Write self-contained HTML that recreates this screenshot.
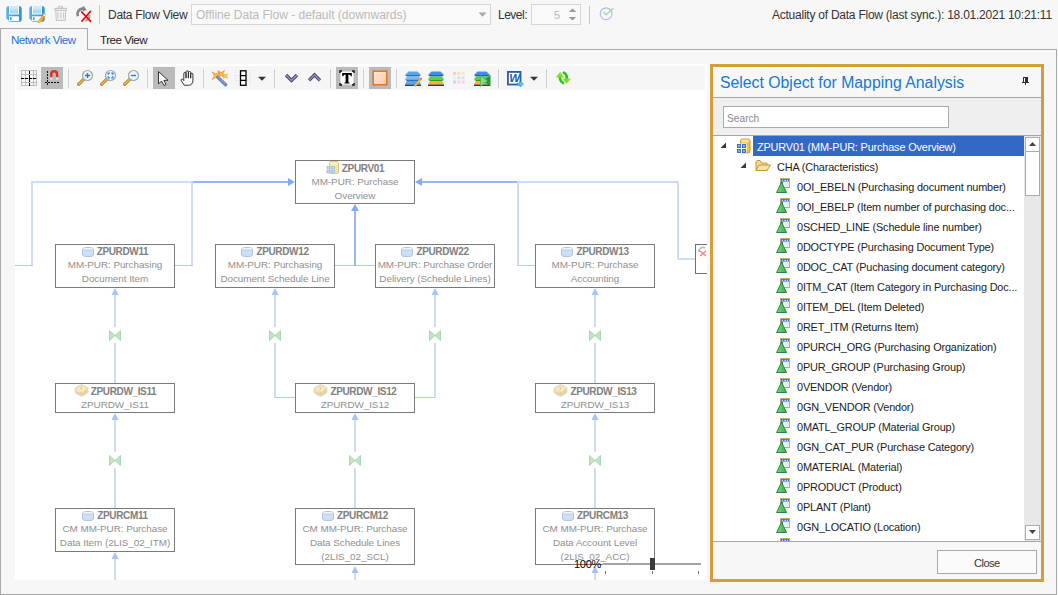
<!DOCTYPE html>
<html><head><meta charset="utf-8">
<style>
*{box-sizing:border-box}
html,body{margin:0;padding:0}
body{width:1058px;height:595px;background:#f7f7f7;position:relative;overflow:hidden;font-family:"Liberation Sans",sans-serif;color:#333}
.a{position:absolute}
.t{position:absolute;white-space:nowrap;line-height:1}
.sep{position:absolute;width:1px;background:#c8c8c8}
.bx{position:absolute;width:120px;border:1px solid #7a7a7a;background:#fff;text-align:center;font-size:9.9px;letter-spacing:-0.05px;line-height:14px;color:#8f8f8f;white-space:nowrap}
.bx div{position:relative;top:-1px}
.bx .bt{font-weight:bold;color:#808080;font-size:10px;letter-spacing:-0.35px;top:0}
.li{position:absolute;white-space:nowrap;font-size:10.9px;letter-spacing:-0.16px;line-height:20px;color:#222}
</style></head><body>
<!-- top toolbar -->
<div class="sep" style="left:99px;top:5px;height:19px"></div>
<div class="t" style="left:108px;top:9px;font-size:12px;letter-spacing:-0.27px;color:#333">Data Flow View</div>
<div class="a" style="left:191px;top:4px;width:300px;height:21px;border:1px solid #d6d6d6;background:#f9f9f9"></div>
<div class="t" style="left:196px;top:9px;font-size:12px;color:#bababa">Offline Data Flow - default (downwards)</div>
<div class="t" style="left:498px;top:9px;font-size:12px;letter-spacing:-0.5px;color:#333">Level:</div>
<div class="a" style="left:531px;top:4px;width:50px;height:21px;border:1px solid #d6d6d6;background:#f9f9f9"></div>
<div class="t" style="left:554px;top:10px;font-size:11px;color:#b8b8b8">5</div>
<div class="sep" style="left:589px;top:6px;height:18px"></div>
<div class="t" style="left:772px;top:9px;font-size:12px;letter-spacing:-0.24px;color:#333">Actuality of Data Flow (last sync.): 18.01.2021 10:21:11</div>

<!-- tabs & panel border -->
<div class="a" style="left:0;top:49px;width:1057px;height:546px;border:1px solid #a9a9a9;border-right-width:1px"></div>
<div class="a" style="left:0;top:28px;width:88px;height:22px;border:1px solid #a9a9a9;border-bottom:none;background:#f7f7f7"></div>
<div class="t" style="left:11px;top:34px;font-size:11.6px;letter-spacing:-0.5px;color:#1a74d6">Network View</div>
<div class="t" style="left:100px;top:34px;font-size:11.6px;letter-spacing:-0.5px;color:#222">Tree View</div>

<!-- canvas -->
<div class="a" style="left:15px;top:64px;width:692px;height:516px;background:#fff"></div>
<div class="a" style="left:17px;top:66px;width:688px;height:24px;background:#f6f6f6"></div>

<!-- top icons -->
<svg class="a" style="left:6px;top:6px" width="16" height="16" viewBox="0 0 16 16"><defs><linearGradient id="fl" x1="0" y1="0" x2="0" y2="1"><stop offset="0" stop-color="#d6eef9"/><stop offset="1" stop-color="#a3d2ee"/></linearGradient><linearGradient id="fb" x1="0" y1="0" x2="1" y2="0"><stop offset="0" stop-color="#5ab3e4"/><stop offset="1" stop-color="#2f93d2"/></linearGradient></defs><path d="M2.5 0.3 H13.5 Q15.7 0.3 15.7 2.5 V13.5 Q15.7 15.7 13.5 15.7 H3.8 L0.3 12.2 V2.5 Q0.3 0.3 2.5 0.3Z" fill="url(#fb)"/><rect x="3" y="0.3" width="10" height="8.2" fill="#fff"/><rect x="4" y="0.3" width="8" height="7.2" fill="url(#fl)"/><rect x="3" y="10.3" width="10" height="4.6" fill="#fff"/><rect x="4" y="11.2" width="1.6" height="2.6" fill="#3d9fd8"/></svg>
<svg class="a" style="left:29px;top:6px" width="17" height="17" viewBox="0 0 17 17"><defs><linearGradient id="pg" x1="0" y1="0" x2="1" y2="0"><stop offset="0" stop-color="#ffd23a"/><stop offset="1" stop-color="#f47a1c"/></linearGradient></defs><path d="M2.5 0.3 H13.5 Q15.7 0.3 15.7 2.5 V13.5 Q15.7 15.7 13.5 15.7 H3.8 L0.3 12.2 V2.5 Q0.3 0.3 2.5 0.3Z" fill="url(#fb)"/><rect x="3" y="0.3" width="10" height="8.2" fill="#fff"/><rect x="4" y="0.3" width="8" height="7.2" fill="url(#fl)"/><rect x="3" y="10.3" width="10" height="4.6" fill="#fff"/><rect x="4" y="11.2" width="1.6" height="2.6" fill="#3d9fd8"/><path d="M8.3 15.3 L13.8 9 L16.3 11 L10.6 17.2 L8 17.2Z" fill="url(#pg)"/><path d="M13.8 9 L15 7.6 L17 9.4 L16.3 11Z" fill="#e6eef2"/><path d="M15 7.6 L15.8 6.8 L17 7.9 L17 9.4Z" fill="#f49a8a"/></svg>
<svg class="a" style="left:54px;top:5px" width="14" height="17" viewBox="0 0 14 17"><g fill="none" stroke="#c6c6c6" stroke-width="1.1"><rect x="4.5" y="1.2" width="4" height="2" rx="0.8"/><rect x="0.7" y="3.4" width="12" height="2" rx="0.8"/><path d="M1.8 5.6 L2.3 15.4 H11.2 L11.7 5.6"/><path d="M4 7.2 V13.5 M6.8 7.2 V13.5 M9.6 7.2 V13.5"/></g></svg>
<svg class="a" style="left:75px;top:5px" width="18" height="18" viewBox="0 0 18 18"><path d="M2.8 11.2 Q1.4 4.4 8.2 3.4" fill="none" stroke="#858585" stroke-width="2.6"/><polygon points="8.3,0.6 11.6,4.9 7.6,6.4" fill="#858585"/><path d="M14.4 9.8 Q14.8 14.6 10.4 15.6" fill="none" stroke="#a3a3a3" stroke-width="2.2"/><path d="M6.6 6.8 L15.6 16.4 M15.5 6.4 L6.8 16.2" stroke="#e21010" stroke-width="1.7" stroke-linecap="round"/></svg>
<svg class="a" style="left:595px;top:5px" width="22" height="18" viewBox="0 0 22 18"><circle cx="11.1" cy="8.7" r="5.9" fill="none" stroke="#b4bbee" stroke-width="1.2"/><path d="M8.5 7 L11 9.8 L18.5 3.2" fill="none" stroke="#a6dba8" stroke-width="1.4"/></svg>
<!-- combo arrows -->
<svg class="a" style="left:478px;top:12px" width="9" height="6" viewBox="0 0 9 6"><polygon points="0.5,0.5 8.5,0.5 4.5,4.8" fill="#a8a8a8"/></svg>
<svg class="a" style="left:568px;top:8px" width="9" height="14" viewBox="0 0 9 14"><polygon points="4.5,0.5 8.3,4 0.7,4" fill="#999"/><polygon points="0.7,9 8.3,9 4.5,12.5" fill="#999"/></svg>

<!-- diagram toolbar -->
<svg class="a" style="left:21px;top:70px" width="16" height="16" viewBox="0 0 16 16"><g stroke="#bdbdbd" stroke-width="1" shape-rendering="crispEdges"><path d="M0.5 0 V16 M4.5 0 V16 M8.5 0 V16 M12 0 V16 M15.5 0 V16 M0 0.5 H16 M0 4.5 H16 M0 8.5 H16 M0 12 H16 M0 15.5 H16"/></g><g stroke="#000" stroke-width="1.4" stroke-dasharray="3 1" shape-rendering="crispEdges"><path d="M8.5 1 V16 M0 8.5 H16"/></g></svg>
<div class="a" style="left:41px;top:67px;width:22px;height:22px;background:#bbbbbb"></div>
<svg class="a" style="left:43px;top:69px" width="18" height="18" viewBox="0 0 18 18"><g stroke="#111" stroke-width="1.2" stroke-dasharray="1.5 1.5" shape-rendering="crispEdges"><path d="M4.5 2 V17 M2 13.5 H17"/></g><path d="M8.3 8.5 V5.2 A2.9 2.9 0 0 1 14.1 5.2 V8.5" fill="none" stroke="#d83030" stroke-width="2.4"/><rect x="7.1" y="8.3" width="2.4" height="2.4" fill="#dde3e6"/><rect x="12.9" y="8.3" width="2.4" height="2.4" fill="#dde3e6"/></svg>
<div class="sep" style="left:68px;top:69px;height:19px;background:#d0d0d0"></div>
<svg class="a" style="left:76px;top:69px" width="18" height="18" viewBox="0 0 18 18"><path d="M2.6 15.4 L7.6 10.4" stroke="#a8741f" stroke-width="3" stroke-linecap="round"/><path d="M2.6 15.4 L7.6 10.4" stroke="#e8b552" stroke-width="1.6" stroke-linecap="round"/><circle cx="11.5" cy="6.5" r="5" fill="#eef3f5" stroke="#9eaaa8" stroke-width="1.2"/><path d="M11.5 3.9 V9.1 M8.9 6.5 H14.1" stroke="#1f7be0" stroke-width="1.4"/></svg>
<svg class="a" style="left:99px;top:69px" width="18" height="18" viewBox="0 0 18 18"><path d="M2.6 15.4 L7.6 10.4" stroke="#a8741f" stroke-width="3" stroke-linecap="round"/><path d="M2.6 15.4 L7.6 10.4" stroke="#e8b552" stroke-width="1.6" stroke-linecap="round"/><circle cx="11.5" cy="6.5" r="5" fill="#eef3f5" stroke="#9eaaa8" stroke-width="1.2"/><path d="M9.2 5.8 V4.2 H10.8 M12.2 4.2 H13.8 V5.8 M13.8 7.2 V8.8 H12.2 M10.8 8.8 H9.2 V7.2" fill="none" stroke="#1f7be0" stroke-width="1.2"/></svg>
<svg class="a" style="left:122px;top:69px" width="18" height="18" viewBox="0 0 18 18"><path d="M2.6 15.4 L7.6 10.4" stroke="#a8741f" stroke-width="3" stroke-linecap="round"/><path d="M2.6 15.4 L7.6 10.4" stroke="#e8b552" stroke-width="1.6" stroke-linecap="round"/><circle cx="11.5" cy="6.5" r="5" fill="#eef3f5" stroke="#9eaaa8" stroke-width="1.2"/><path d="M8.9 6.5 H14.1" stroke="#1f7be0" stroke-width="1.4"/></svg>
<div class="sep" style="left:147px;top:69px;height:19px;background:#d0d0d0"></div>
<div class="a" style="left:153px;top:67px;width:22px;height:22px;background:#bbbbbb"></div>
<svg class="a" style="left:157px;top:70px" width="14" height="17" viewBox="0 0 14 17"><path d="M1.5 1.5 V14 L4.5 11 L7 15.5 L9 14.5 L6.8 10.3 L11 10.3Z" fill="#fff" stroke="#333" stroke-width="1" stroke-linejoin="round"/></svg>
<svg class="a" style="left:180px;top:70px" width="15" height="16" viewBox="0 0 15 16"><path d="M4.2 15.2 L1.3 10.8 Q0.7 9.7 1.6 9.2 Q2.4 8.8 3.1 9.7 L3.8 10.6 V3.6 Q3.8 2.5 4.9 2.5 Q6 2.5 6 3.6 V8.2 V2 Q6 0.9 7.2 0.9 Q8.4 0.9 8.4 2 V8.2 V2.6 Q8.4 1.5 9.5 1.5 Q10.7 1.5 10.7 2.6 V8.2 V4.2 Q10.7 3.2 11.8 3.2 Q12.9 3.2 12.9 4.2 V10.2 Q12.9 15.2 8.6 15.2Z" fill="#fff" stroke="#1e1e1e" stroke-width="0.9" stroke-linejoin="round"/></svg>
<div class="sep" style="left:203px;top:69px;height:19px;background:#d0d0d0"></div>
<svg class="a" style="left:211px;top:69px" width="18" height="18" viewBox="0 0 18 18"><polygon points="13.49,8.39 10.10,6.40 6.71,8.39 8.70,5.00 6.71,1.61 10.10,3.60 13.49,1.61 11.50,5.00" fill="#f9c23c" stroke="#f58a2a" stroke-width="0.7" stroke-linejoin="round"/><polygon points="16.63,9.33 14.30,8.10 11.97,9.33 13.20,7.00 11.97,4.67 14.30,5.90 16.63,4.67 15.40,7.00" fill="#fbd35a" stroke="#f5a040" stroke-width="0.6" stroke-linejoin="round"/><polygon points="8.75,10.45 5.00,8.30 1.25,10.45 3.40,6.70 1.25,2.95 5.00,5.10 8.75,2.95 6.60,6.70" fill="#f9c23c" stroke="#f5842a" stroke-width="0.7" stroke-linejoin="round"/><path d="M6.8 8.2 L14.6 15.8" stroke="#7283b5" stroke-width="3.3" stroke-linecap="round"/><path d="M7.2 8 L14.2 14.8" stroke="#c9d3ef" stroke-width="0.9" stroke-dasharray="1.2 0.8"/></svg>
<svg class="a" style="left:235px;top:70px" width="16" height="16" viewBox="0 0 16 16"><g stroke="#e4e4e4" stroke-dasharray="1 1"><path d="M0 5.5 H16 M0 10.5 H16 M1 0 V16 M15 0 V16"/></g><rect x="5.5" y="0.8" width="5.5" height="14.5" fill="#fff" stroke="#000" stroke-width="1.3"/><path d="M5.5 5.6 H11 M5.5 10.4 H11" stroke="#000" stroke-width="1.3"/></svg>
<svg class="a" style="left:257px;top:76px" width="10" height="6" viewBox="0 0 10 6"><polygon points="1,0.8 9,0.8 5,4.8" fill="#333"/></svg>
<div class="sep" style="left:274px;top:69px;height:19px;background:#d0d0d0"></div>
<svg class="a" style="left:284px;top:72px" width="15" height="11" viewBox="0 0 15 11"><path d="M2 3 L7.5 8.5 L13 3" fill="none" stroke="#45456a" stroke-width="3.3" stroke-linejoin="miter"/><path d="M2 3 L7.5 8.5 L13 3" fill="none" stroke="#9c9cc8" stroke-width="1.2" stroke-linejoin="miter"/></svg>
<svg class="a" style="left:307px;top:72px" width="15" height="11" viewBox="0 0 15 11"><path d="M2 8.3 L7.5 2.8 L13 8.3" fill="none" stroke="#45456a" stroke-width="3.3" stroke-linejoin="miter"/><path d="M2 8.3 L7.5 2.8 L13 8.3" fill="none" stroke="#9c9cc8" stroke-width="1.2" stroke-linejoin="miter"/></svg>
<div class="sep" style="left:330px;top:69px;height:19px;background:#d0d0d0"></div>
<div class="a" style="left:336px;top:67px;width:22px;height:22px;background:#bbbbbb"></div>
<svg class="a" style="left:339px;top:70px" width="16" height="16" viewBox="0 0 16 16"><rect x="1.5" y="1.5" width="13" height="13" fill="#fff"/><path d="M1 3 V1 H3 M13 1 H15 V3 M15 13 V15 H13 M3 15 H1 V13" fill="none" stroke="#111" stroke-width="1.4"/><path d="M3.2 3 H12.8 V6.2 H11.8 Q11.6 4.4 9.4 4.4 V12 Q9.4 12.7 10.6 12.7 V13.6 H5.4 V12.7 Q6.6 12.7 6.6 12 V4.4 Q4.4 4.4 4.2 6.2 H3.2Z" fill="#000"/></svg>
<div class="sep" style="left:363px;top:69px;height:19px;background:#d0d0d0"></div>
<div class="a" style="left:369px;top:67px;width:22px;height:22px;background:#bbbbbb"></div>
<svg class="a" style="left:372px;top:70px" width="16" height="16" viewBox="0 0 16 16"><defs><linearGradient id="og" x1="0" y1="0" x2="1" y2="1"><stop offset="0" stop-color="#ffe6d6"/><stop offset="1" stop-color="#ffc9a6"/></linearGradient></defs><rect x="1.2" y="1.2" width="13.6" height="13.6" fill="url(#og)" stroke="#e8731c" stroke-width="1.5"/></svg>
<div class="sep" style="left:396px;top:69px;height:19px;background:#d0d0d0"></div>
<svg class="a" style="left:405px;top:71px" width="17" height="16" viewBox="0 0 17 16"><path d="M3.5 0.5 H12.5 L16 4 H0Z" fill="#5aa5ea"/><path d="M0 4 H16 L14 5.5 H2Z" fill="#2f6fc0"/><path d="M2 5.5 H14 L16 8.5 H0Z" fill="#7ab8f0"/><path d="M0 8.5 H16 L14 10 H2Z" fill="#2f6fc0"/><path d="M2 10 H14 L16 13.5 H0Z" fill="#5aa5ea"/><rect x="0" y="13.5" width="16" height="1.5" fill="#1c3c78"/><path d="M9 14.5 L15 7.5 L16.5 8.8 L10.5 15.5Z" fill="#f3c94a" stroke="#b08a20" stroke-width="0.5"/><path d="M15 7.5 L16 6.5 L17 7.5 L16.5 8.8Z" fill="#e05050"/></svg>
<svg class="a" style="left:428px;top:71px" width="17" height="16" viewBox="0 0 17 16"><path d="M3.5 0.5 H12.5 L16 4 H0Z" fill="#3f8fe8"/><path d="M0 4 H16 L14 5.5 H2Z" fill="#2a5ab0"/><path d="M2 5.5 H14 L16 8.5 H0Z" fill="#56d04a"/><path d="M0 8.5 H16 L14 10 H2Z" fill="#2a9a2a"/><path d="M2 10 H14 L16 13.5 H0Z" fill="#ffb41e"/><rect x="0" y="13.5" width="16" height="1.5" fill="#3a3a3a"/></svg>
<svg class="a" style="left:453px;top:72px" width="12" height="12" viewBox="0 0 12 12"><rect x="0" y="0" width="3" height="3" fill="#f6cccc"/><rect x="4.3" y="0" width="3" height="3" fill="#f8dcc8"/><rect x="8.6" y="0" width="3" height="3" fill="#f2ecc4"/><rect x="0" y="4.3" width="3" height="3" fill="#e4f2dc"/><rect x="4.3" y="4.3" width="3" height="3" fill="#cfe9cf"/><rect x="8.6" y="4.3" width="3" height="3" fill="#cfe2f4"/><rect x="0" y="8.6" width="3" height="3" fill="#ccd6ea"/><rect x="4.3" y="8.6" width="3" height="3" fill="#e8d8f0"/><rect x="8.6" y="8.6" width="3" height="3" fill="#f4d4e4"/></svg>
<svg class="a" style="left:474px;top:71px" width="17" height="16" viewBox="0 0 17 16"><path d="M3.5 0.5 H12.5 L16 4 H0Z" fill="#3f8fe8"/><path d="M0 4 H16 L14 5.5 H2Z" fill="#2a5ab0"/><path d="M2 5.5 H14 L16 8.5 H0Z" fill="#56d04a"/><path d="M0 8.5 H16 L14 10 H2Z" fill="#2a9a2a"/><path d="M2 10 H14 L16 13.5 H0Z" fill="#ffb41e"/><rect x="0" y="13.5" width="16" height="1.5" fill="#3a3a3a"/><path d="M16.5 4 L16.5 15.5 L9 9.7Z" fill="#1f9a3a"/><path d="M6.5 4.5 L13.5 9.9 L6.5 15.5Z" fill="#8ad48f" stroke="#3aa84f" stroke-width="0.6"/></svg>
<div class="sep" style="left:498px;top:69px;height:19px;background:#d0d0d0"></div>
<svg class="a" style="left:507px;top:71px" width="17" height="16" viewBox="0 0 17 16"><rect x="0.9" y="0.9" width="12.6" height="12.6" fill="#fff" stroke="#1d5fb5" stroke-width="1.8"/><text x="7.4" y="11.3" text-anchor="middle" font-family="Liberation Sans" font-style="italic" font-weight="bold" font-size="11.5" fill="#1d5fb5" letter-spacing="-0.5">W</text><path d="M10.5 12 H13 V10 L16.5 13 L13 16 V14 H10.5Z" fill="#63c8e8" stroke="#2a7fb0" stroke-width="0.6"/></svg>
<svg class="a" style="left:529px;top:76px" width="10" height="6" viewBox="0 0 10 6"><polygon points="1,0.8 9,0.8 5,4.8" fill="#333"/></svg>
<div class="sep" style="left:546px;top:69px;height:19px;background:#d0d0d0"></div>
<svg class="a" style="left:555px;top:71px" width="17" height="14" viewBox="0 0 17 14"><path d="M5 4.5 Q4 10 9 12.5" fill="none" stroke="#1ec81e" stroke-width="2.6"/><polygon points="0.8,6.5 5,1 9,6.5" fill="#7de21e"/><path d="M11.5 9 Q12.8 3.5 8 1.2" fill="none" stroke="#1ec81e" stroke-width="2.6"/><polygon points="7.5,7.5 16,7.5 11.5,12.8" fill="#7de21e"/></svg>

<!-- diagram -->
<svg class="a" style="left:0;top:0" width="1058" height="595" viewBox="0 0 1058 595" shape-rendering="crispEdges"><rect x="31" y="181" width="161" height="2" fill="#cddcf8"/><rect x="192" y="181" width="96" height="2" fill="#94b8f4"/><rect x="420" y="181" width="98" height="2" fill="#94b8f4"/><rect x="518" y="181" width="160" height="2" fill="#cddcf8"/><rect x="31" y="181" width="2" height="85" fill="#cddcf8"/><rect x="15" y="265" width="18" height="1" fill="#b0c9f6"/><rect x="191" y="181" width="2" height="85" fill="#cddcf8"/><rect x="175" y="265" width="18" height="1" fill="#b0c9f6"/><rect x="335" y="265" width="40" height="1" fill="#b0c9f6"/><rect x="354" y="210" width="2" height="56" fill="#94b8f4"/><rect x="517" y="181" width="2" height="85" fill="#cddcf8"/><rect x="518" y="265" width="17" height="1" fill="#b0c9f6"/><rect x="677" y="181" width="2" height="78" fill="#cddcf8"/><rect x="678" y="258" width="17" height="2" fill="#cddcf8"/><rect x="114" y="295" width="2" height="32" fill="#cddcf8"/><rect x="114" y="343" width="2" height="40" fill="#cddcf8"/><rect x="274" y="295" width="2" height="32" fill="#cddcf8"/><rect x="274" y="343" width="2" height="55" fill="#cddcf8"/><rect x="434" y="295" width="2" height="32" fill="#cddcf8"/><rect x="434" y="343" width="2" height="55" fill="#cddcf8"/><rect x="594" y="295" width="2" height="32" fill="#cddcf8"/><rect x="594" y="343" width="2" height="40" fill="#cddcf8"/><rect x="275" y="397" width="20" height="1" fill="#b0c9f6"/><rect x="415" y="397" width="20" height="1" fill="#b0c9f6"/><rect x="114" y="420" width="2" height="32" fill="#cddcf8"/><rect x="114" y="468" width="2" height="40" fill="#cddcf8"/><rect x="354" y="420" width="2" height="32" fill="#cddcf8"/><rect x="354" y="468" width="2" height="40" fill="#cddcf8"/><rect x="594" y="420" width="2" height="32" fill="#cddcf8"/><rect x="594" y="468" width="2" height="40" fill="#cddcf8"/><rect x="114" y="559" width="2" height="21" fill="#cddcf8"/><rect x="354" y="573" width="2" height="7" fill="#cddcf8"/><rect x="594" y="573" width="2" height="7" fill="#cddcf8"/><g shape-rendering="geometricPrecision"><polygon points="295,182 288,178 288,186" fill="#80aaf2"/><polygon points="415,182 422,178 422,186" fill="#80aaf2"/><polygon points="355,204 351,211 359,211" fill="#80aaf2"/><polygon points="115,288 111.5,295 118.5,295" fill="#a6c3f7"/><polygon points="275,288 271.5,295 278.5,295" fill="#a6c3f7"/><polygon points="435,288 431.5,295 438.5,295" fill="#a6c3f7"/><polygon points="595,288 591.5,295 598.5,295" fill="#a6c3f7"/><polygon points="115,413 111.5,420 118.5,420" fill="#a6c3f7"/><polygon points="355,413 351.5,420 358.5,420" fill="#a6c3f7"/><polygon points="595,413 591.5,420 598.5,420" fill="#a6c3f7"/><polygon points="115,552 111.5,559 118.5,559" fill="#a6c3f7"/><polygon points="355,566 351.5,573 358.5,573" fill="#a6c3f7"/><polygon points="595,566 591.5,573 598.5,573" fill="#a6c3f7"/><path d="M109.5 330.5 L115 335.5 L109.5 340.5Z M120.5 330.5 L115 335.5 L120.5 340.5Z" fill="#bfe5c0" stroke="#9fd3ab" stroke-width="0.8" stroke-linejoin="round"/><path d="M269.5 330.5 L275 335.5 L269.5 340.5Z M280.5 330.5 L275 335.5 L280.5 340.5Z" fill="#bfe5c0" stroke="#9fd3ab" stroke-width="0.8" stroke-linejoin="round"/><path d="M429.5 330.5 L435 335.5 L429.5 340.5Z M440.5 330.5 L435 335.5 L440.5 340.5Z" fill="#bfe5c0" stroke="#9fd3ab" stroke-width="0.8" stroke-linejoin="round"/><path d="M589.5 330.5 L595 335.5 L589.5 340.5Z M600.5 330.5 L595 335.5 L600.5 340.5Z" fill="#bfe5c0" stroke="#9fd3ab" stroke-width="0.8" stroke-linejoin="round"/><path d="M109.5 455.5 L115 460.5 L109.5 465.5Z M120.5 455.5 L115 460.5 L120.5 465.5Z" fill="#bfe5c0" stroke="#9fd3ab" stroke-width="0.8" stroke-linejoin="round"/><path d="M349.5 455.5 L355 460.5 L349.5 465.5Z M360.5 455.5 L355 460.5 L360.5 465.5Z" fill="#bfe5c0" stroke="#9fd3ab" stroke-width="0.8" stroke-linejoin="round"/><path d="M589.5 455.5 L595 460.5 L589.5 465.5Z M600.5 455.5 L595 460.5 L600.5 465.5Z" fill="#bfe5c0" stroke="#9fd3ab" stroke-width="0.8" stroke-linejoin="round"/></g></svg>
<div class="bx" style="left:295px;top:160px;height:44px"><div class="bt"><svg width="13" height="13" viewBox="0 0 13 13" style="vertical-align:-2px;margin-right:3px"><rect x="3.5" y="0.5" width="9" height="12" rx="1.5" fill="#f6e3a8" stroke="#e2c785"/><rect x="4" y="1" width="8" height="3" rx="1.2" fill="#faefc4"/><g fill="#a9c6e8"><rect x="0.5" y="5" width="4" height="3.6" rx="0.6"/><rect x="5" y="5" width="4" height="3.6" rx="0.6"/><rect x="0.5" y="9" width="4" height="3.6" rx="0.6"/><rect x="5" y="9" width="4" height="3.6" rx="0.6"/></g><g fill="#e9f1fa"><rect x="2" y="6.3" width="1" height="1"/><rect x="6.5" y="6.3" width="1" height="1"/><rect x="2" y="10.3" width="1" height="1"/><rect x="6.5" y="10.3" width="1" height="1"/></g></svg>ZPURV01</div><div>MM-PUR: Purchase</div><div>Overview</div></div>
<div class="bx" style="left:55px;top:244px;height:44px"><div class="bt"><svg width="12" height="10" viewBox="0 0 12 10" style="vertical-align:-2px;margin-right:3px"><path d="M0.5 2 Q0.5 0.5 6 0.5 Q11.5 0.5 11.5 2 V8 Q11.5 9.5 6 9.5 Q0.5 9.5 0.5 8Z" fill="#cfe0f6" stroke="#a9c3e6"/><path d="M0.8 2.8 Q6 4.2 11.2 2.8" fill="none" stroke="#b5cbea" stroke-width="0.9"/><rect x="1.2" y="1.1" width="9.6" height="1.4" fill="#eef4fc"/></svg>ZPURDW11</div><div>MM-PUR: Purchasing</div><div>Document Item</div></div>
<div class="bx" style="left:215px;top:244px;height:44px"><div class="bt"><svg width="12" height="10" viewBox="0 0 12 10" style="vertical-align:-2px;margin-right:3px"><path d="M0.5 2 Q0.5 0.5 6 0.5 Q11.5 0.5 11.5 2 V8 Q11.5 9.5 6 9.5 Q0.5 9.5 0.5 8Z" fill="#cfe0f6" stroke="#a9c3e6"/><path d="M0.8 2.8 Q6 4.2 11.2 2.8" fill="none" stroke="#b5cbea" stroke-width="0.9"/><rect x="1.2" y="1.1" width="9.6" height="1.4" fill="#eef4fc"/></svg>ZPURDW12</div><div>MM-PUR: Purchasing</div><div>Document Schedule Line</div></div>
<div class="bx" style="left:375px;top:244px;height:44px"><div class="bt"><svg width="12" height="10" viewBox="0 0 12 10" style="vertical-align:-2px;margin-right:3px"><path d="M0.5 2 Q0.5 0.5 6 0.5 Q11.5 0.5 11.5 2 V8 Q11.5 9.5 6 9.5 Q0.5 9.5 0.5 8Z" fill="#cfe0f6" stroke="#a9c3e6"/><path d="M0.8 2.8 Q6 4.2 11.2 2.8" fill="none" stroke="#b5cbea" stroke-width="0.9"/><rect x="1.2" y="1.1" width="9.6" height="1.4" fill="#eef4fc"/></svg>ZPURDW22</div><div>MM-PUR: Purchase Order</div><div>Delivery (Schedule Lines)</div></div>
<div class="bx" style="left:535px;top:244px;height:44px"><div class="bt"><svg width="12" height="10" viewBox="0 0 12 10" style="vertical-align:-2px;margin-right:3px"><path d="M0.5 2 Q0.5 0.5 6 0.5 Q11.5 0.5 11.5 2 V8 Q11.5 9.5 6 9.5 Q0.5 9.5 0.5 8Z" fill="#cfe0f6" stroke="#a9c3e6"/><path d="M0.8 2.8 Q6 4.2 11.2 2.8" fill="none" stroke="#b5cbea" stroke-width="0.9"/><rect x="1.2" y="1.1" width="9.6" height="1.4" fill="#eef4fc"/></svg>ZPURDW13</div><div>MM-PUR: Purchase</div><div>Accounting</div></div>
<div class="bx" style="left:55px;top:383px;height:30px"><div class="bt"><svg width="15" height="13" viewBox="0 0 15 13" style="vertical-align:-2px;margin-right:2px"><path d="M1 5 Q1 4.2 2 3.6 L6 1 Q7 0.4 8.2 0.8 L12.8 2.8 Q14 3.3 14 4.5 V7.8 Q14 8.8 13 9.4 L8.6 11.9 Q7.5 12.5 6.3 11.9 L2 9.4 Q1 8.8 1 7.8Z" fill="#e8d3a6" stroke="#cfd8e6" stroke-width="0.7"/><path d="M1.3 5.2 L6.8 1.2 L13.6 3.8 L8.3 8.2Z" fill="#f8eab2"/><path d="M2.5 6.8 L6 8.3 M8 6.5 L10 5" stroke="#fff" stroke-width="0.9" stroke-dasharray="1 0.8"/><path d="M7 2.5 L7.5 5.5" stroke="#d8c090" stroke-width="1"/></svg>ZPURDW_IS11</div><div>ZPURDW_IS11</div></div>
<div class="bx" style="left:295px;top:383px;height:30px"><div class="bt"><svg width="15" height="13" viewBox="0 0 15 13" style="vertical-align:-2px;margin-right:2px"><path d="M1 5 Q1 4.2 2 3.6 L6 1 Q7 0.4 8.2 0.8 L12.8 2.8 Q14 3.3 14 4.5 V7.8 Q14 8.8 13 9.4 L8.6 11.9 Q7.5 12.5 6.3 11.9 L2 9.4 Q1 8.8 1 7.8Z" fill="#e8d3a6" stroke="#cfd8e6" stroke-width="0.7"/><path d="M1.3 5.2 L6.8 1.2 L13.6 3.8 L8.3 8.2Z" fill="#f8eab2"/><path d="M2.5 6.8 L6 8.3 M8 6.5 L10 5" stroke="#fff" stroke-width="0.9" stroke-dasharray="1 0.8"/><path d="M7 2.5 L7.5 5.5" stroke="#d8c090" stroke-width="1"/></svg>ZPURDW_IS12</div><div>ZPURDW_IS12</div></div>
<div class="bx" style="left:535px;top:383px;height:30px"><div class="bt"><svg width="15" height="13" viewBox="0 0 15 13" style="vertical-align:-2px;margin-right:2px"><path d="M1 5 Q1 4.2 2 3.6 L6 1 Q7 0.4 8.2 0.8 L12.8 2.8 Q14 3.3 14 4.5 V7.8 Q14 8.8 13 9.4 L8.6 11.9 Q7.5 12.5 6.3 11.9 L2 9.4 Q1 8.8 1 7.8Z" fill="#e8d3a6" stroke="#cfd8e6" stroke-width="0.7"/><path d="M1.3 5.2 L6.8 1.2 L13.6 3.8 L8.3 8.2Z" fill="#f8eab2"/><path d="M2.5 6.8 L6 8.3 M8 6.5 L10 5" stroke="#fff" stroke-width="0.9" stroke-dasharray="1 0.8"/><path d="M7 2.5 L7.5 5.5" stroke="#d8c090" stroke-width="1"/></svg>ZPURDW_IS13</div><div>ZPURDW_IS13</div></div>
<div class="bx" style="left:55px;top:508px;height:44px"><div class="bt"><svg width="12" height="10" viewBox="0 0 12 10" style="vertical-align:-2px;margin-right:3px"><path d="M0.5 2 Q0.5 0.5 6 0.5 Q11.5 0.5 11.5 2 V8 Q11.5 9.5 6 9.5 Q0.5 9.5 0.5 8Z" fill="#cfe0f6" stroke="#a9c3e6"/><path d="M0.8 2.8 Q6 4.2 11.2 2.8" fill="none" stroke="#b5cbea" stroke-width="0.9"/><rect x="1.2" y="1.1" width="9.6" height="1.4" fill="#eef4fc"/></svg>ZPURCM11</div><div>CM MM-PUR: Purchase</div><div>Data Item (2LIS_02_ITM)</div></div>
<div class="bx" style="left:295px;top:508px;height:57px"><div class="bt"><svg width="12" height="10" viewBox="0 0 12 10" style="vertical-align:-2px;margin-right:3px"><path d="M0.5 2 Q0.5 0.5 6 0.5 Q11.5 0.5 11.5 2 V8 Q11.5 9.5 6 9.5 Q0.5 9.5 0.5 8Z" fill="#cfe0f6" stroke="#a9c3e6"/><path d="M0.8 2.8 Q6 4.2 11.2 2.8" fill="none" stroke="#b5cbea" stroke-width="0.9"/><rect x="1.2" y="1.1" width="9.6" height="1.4" fill="#eef4fc"/></svg>ZPURCM12</div><div>CM MM-PUR: Purchase</div><div>Data Schedule Lines</div><div>(2LIS_02_SCL)</div></div>
<div class="bx" style="left:535px;top:508px;height:57px"><div class="bt"><svg width="12" height="10" viewBox="0 0 12 10" style="vertical-align:-2px;margin-right:3px"><path d="M0.5 2 Q0.5 0.5 6 0.5 Q11.5 0.5 11.5 2 V8 Q11.5 9.5 6 9.5 Q0.5 9.5 0.5 8Z" fill="#cfe0f6" stroke="#a9c3e6"/><path d="M0.8 2.8 Q6 4.2 11.2 2.8" fill="none" stroke="#b5cbea" stroke-width="0.9"/><rect x="1.2" y="1.1" width="9.6" height="1.4" fill="#eef4fc"/></svg>ZPURCM13</div><div>CM MM-PUR: Purchase</div><div>Data Account Level</div><div>(2LIS_02_ACC)</div></div>
<!-- partial box -->
<div class="a" style="left:695px;top:244px;width:12px;height:30px;border:1px solid #6f6f6f;border-right:none;background:#fff"></div>
<svg class="a" style="left:697px;top:245px" width="10" height="12" viewBox="0 0 10 12"><path d="M2 7 A4 4 0 0 1 8 3" fill="none" stroke="#b8b8b8" stroke-width="1.6"/><path d="M3 6 L9 11 M9 6 L3 11" stroke="#f08080" stroke-width="1.3"/></svg>
<!-- slider -->
<div class="t" style="left:574px;top:559px;font-size:11px;letter-spacing:-0.3px;color:#000">100%</div>
<div class="a" style="left:603px;top:563px;width:98px;height:2px;background:#a3a3a3"></div>
<div class="a" style="left:650px;top:558px;width:5px;height:12px;background:#3c3c3c"></div>
<div class="a" style="left:605px;top:571px;width:1px;height:3px;background:#777"></div>
<div class="a" style="left:652px;top:571px;width:1px;height:3px;background:#777"></div>
<div class="a" style="left:698px;top:571px;width:1px;height:3px;background:#777"></div>
<!-- right panel -->
<div class="a" style="left:710px;top:64px;width:334px;height:518px;border:3px solid #d69e3a;background:#f7f7f7"></div>
<div class="a" style="left:713px;top:67px;width:328px;height:31px;background:#f7f7f7;border-bottom:1px solid #a6a6a6"></div>
<div class="t" style="left:720px;top:75px;font-size:15.8px;color:#1878d2">Select Object for Mapping Analysis</div>
<svg class="a" style="left:1022px;top:77px" width="8" height="9" viewBox="0 0 8 9" shape-rendering="crispEdges"><rect x="1" y="0" width="5" height="5.5" fill="#2e2e2e"/><rect x="2" y="1" width="1" height="4" fill="#fff"/><rect x="0" y="5" width="7" height="1" fill="#2e2e2e"/><rect x="3" y="6" width="1" height="2" fill="#2e2e2e"/></svg>
<div class="a" style="left:713px;top:98px;width:328px;height:37px;background:#efefef"></div>
<div class="a" style="left:723px;top:106px;width:226px;height:22px;background:#fff;border:1px solid #ababab"></div>
<div class="t" style="left:727px;top:114px;font-size:10.2px;color:#8a8a8a">Search</div>
<div class="a" style="left:713px;top:135px;width:328px;height:407px;background:#fff;border-top:1px solid #a6a6a6;border-bottom:1px solid #a6a6a6"></div>
<svg width="0" height="0" style="position:absolute"><defs>
<linearGradient id="gg" x1="0" x2="1" y1="0" y2="0"><stop offset="0" stop-color="#8ed486"/><stop offset="0.5" stop-color="#5fbf6a"/><stop offset="1" stop-color="#3fa75a"/></linearGradient>
<symbol id="ki" viewBox="0 0 15 16"><rect x="4.5" y="0.5" width="9" height="9" fill="#e6edf8" stroke="#c8ab62"/><rect x="5" y="1" width="8" height="2.5" fill="#3b6fd3"/><rect x="5" y="3.5" width="2" height="5" fill="#3b6fd3"/><rect x="6" y="1.8" width="1" height="1" fill="#fff"/><rect x="8.5" y="1.8" width="1.5" height="1" fill="#fff"/><rect x="11" y="1.8" width="1" height="1" fill="#fff"/><polygon points="5.5,4.3 0.6,14.5 10.6,14.5" fill="url(#gg)" stroke="#1f8b40" stroke-width="1" stroke-linejoin="miter"/></symbol>
</defs></svg>
<div class="a" style="left:0;top:0;width:1058px;height:541px;clip-path:inset(136px 0 0 0)"><div class="a" style="left:753px;top:136px;width:271px;height:20px;background:#3268c6"></div>
<svg class="a" style="left:720px;top:142px" width="7" height="7" viewBox="0 0 7 7"><polygon points="6,0.5 6,6 0.5,6" fill="#3a3a3a"/></svg>
<svg class="a" style="left:736px;top:138px" width="15" height="16" viewBox="0 0 15 16"><rect x="4.5" y="1" width="9.5" height="14" rx="2" fill="#f2c14a" stroke="#c99324"/><rect x="5" y="1.5" width="8.5" height="3" rx="1.5" fill="#f9e29a"/><rect x="0.5" y="5.5" width="10" height="10" fill="#fff"/><g fill="#3d73c9"><rect x="1" y="6" width="4" height="4"/><rect x="6" y="6" width="4" height="4"/><rect x="1" y="11" width="4" height="4"/><rect x="6" y="11" width="4" height="4"/></g><g fill="#dfe9f7"><rect x="2.3" y="7.3" width="1.4" height="1.4"/><rect x="7.3" y="7.3" width="1.4" height="1.4"/><rect x="2.3" y="12.3" width="1.4" height="1.4"/><rect x="7.3" y="12.3" width="1.4" height="1.4"/></g></svg>
<div class="li" style="left:757px;top:137px;color:#fff">ZPURV01 (MM-PUR: Purchase Overview)</div>
<svg class="a" style="left:740px;top:162px" width="7" height="7" viewBox="0 0 7 7"><polygon points="6,0.5 6,6 0.5,6" fill="#3a3a3a"/></svg>
<svg class="a" style="left:755px;top:159px" width="16" height="13" viewBox="0 0 16 13"><path d="M1 2.5 L1 11.5 L12 11.5 L12 4 L6.5 4 L5 1.5 L2 1.5Z" fill="#f7d998" stroke="#c8902e"/><path d="M1 11.5 L4 6 L15.5 6 L12 11.5Z" fill="#fbe3ae" stroke="#c8902e" stroke-linejoin="round"/></svg>
<div class="li" style="left:777px;top:157px">CHA (Characteristics)</div>
<svg class="a" style="left:776px;top:178px" width="15" height="16"><use href="#ki"/></svg>
<div class="li" style="left:797px;top:177px">0OI_EBELN (Purchasing document number)</div>
<svg class="a" style="left:776px;top:198px" width="15" height="16"><use href="#ki"/></svg>
<div class="li" style="left:797px;top:197px">0OI_EBELP (Item number of purchasing doc...</div>
<svg class="a" style="left:776px;top:218px" width="15" height="16"><use href="#ki"/></svg>
<div class="li" style="left:797px;top:217px">0SCHED_LINE (Schedule line number)</div>
<svg class="a" style="left:776px;top:238px" width="15" height="16"><use href="#ki"/></svg>
<div class="li" style="left:797px;top:237px">0DOCTYPE (Purchasing Document Type)</div>
<svg class="a" style="left:776px;top:258px" width="15" height="16"><use href="#ki"/></svg>
<div class="li" style="left:797px;top:257px">0DOC_CAT (Puchasing document category)</div>
<svg class="a" style="left:776px;top:278px" width="15" height="16"><use href="#ki"/></svg>
<div class="li" style="left:797px;top:277px">0ITM_CAT (Item Category in Purchasing Doc...</div>
<svg class="a" style="left:776px;top:298px" width="15" height="16"><use href="#ki"/></svg>
<div class="li" style="left:797px;top:297px">0ITEM_DEL (Item Deleted)</div>
<svg class="a" style="left:776px;top:318px" width="15" height="16"><use href="#ki"/></svg>
<div class="li" style="left:797px;top:317px">0RET_ITM (Returns Item)</div>
<svg class="a" style="left:776px;top:338px" width="15" height="16"><use href="#ki"/></svg>
<div class="li" style="left:797px;top:337px">0PURCH_ORG (Purchasing Organization)</div>
<svg class="a" style="left:776px;top:358px" width="15" height="16"><use href="#ki"/></svg>
<div class="li" style="left:797px;top:357px">0PUR_GROUP (Purchasing Group)</div>
<svg class="a" style="left:776px;top:378px" width="15" height="16"><use href="#ki"/></svg>
<div class="li" style="left:797px;top:377px">0VENDOR (Vendor)</div>
<svg class="a" style="left:776px;top:398px" width="15" height="16"><use href="#ki"/></svg>
<div class="li" style="left:797px;top:397px">0GN_VENDOR (Vendor)</div>
<svg class="a" style="left:776px;top:418px" width="15" height="16"><use href="#ki"/></svg>
<div class="li" style="left:797px;top:417px">0MATL_GROUP (Material Group)</div>
<svg class="a" style="left:776px;top:438px" width="15" height="16"><use href="#ki"/></svg>
<div class="li" style="left:797px;top:437px">0GN_CAT_PUR (Purchase Category)</div>
<svg class="a" style="left:776px;top:458px" width="15" height="16"><use href="#ki"/></svg>
<div class="li" style="left:797px;top:457px">0MATERIAL (Material)</div>
<svg class="a" style="left:776px;top:478px" width="15" height="16"><use href="#ki"/></svg>
<div class="li" style="left:797px;top:477px">0PRODUCT (Product)</div>
<svg class="a" style="left:776px;top:498px" width="15" height="16"><use href="#ki"/></svg>
<div class="li" style="left:797px;top:497px">0PLANT (Plant)</div>
<svg class="a" style="left:776px;top:518px" width="15" height="16"><use href="#ki"/></svg>
<div class="li" style="left:797px;top:517px">0GN_LOCATIO (Location)</div>
<svg class="a" style="left:776px;top:538px" width="15" height="16"><use href="#ki"/></svg></div>
<div class="a" style="left:1024px;top:136px;width:17px;height:405px;background:#e8e8e8"></div>
<div class="a" style="left:1025px;top:137px;width:15px;height:15px;background:#fff;border:1px solid #acacac"></div>
<svg class="a" style="left:1028px;top:141px" width="9" height="6" viewBox="0 0 9 6"><polygon points="4.5,1 8,5 1,5" fill="#444"/></svg>
<div class="a" style="left:1025px;top:151px;width:15px;height:45px;background:#fff;border:1px solid #acacac"></div>
<div class="a" style="left:1025px;top:525px;width:15px;height:15px;background:#fff;border:1px solid #acacac"></div>
<svg class="a" style="left:1028px;top:529px" width="9" height="6" viewBox="0 0 9 6"><polygon points="1,1 8,1 4.5,5" fill="#444"/></svg>
<div class="a" style="left:937px;top:550px;width:100px;height:24px;background:#fbfbfb;border:1px solid #a9a9a9"></div>
<div class="t" style="left:974px;top:558px;font-size:11px;letter-spacing:-0.5px;color:#333">Close</div>
</body></html>
